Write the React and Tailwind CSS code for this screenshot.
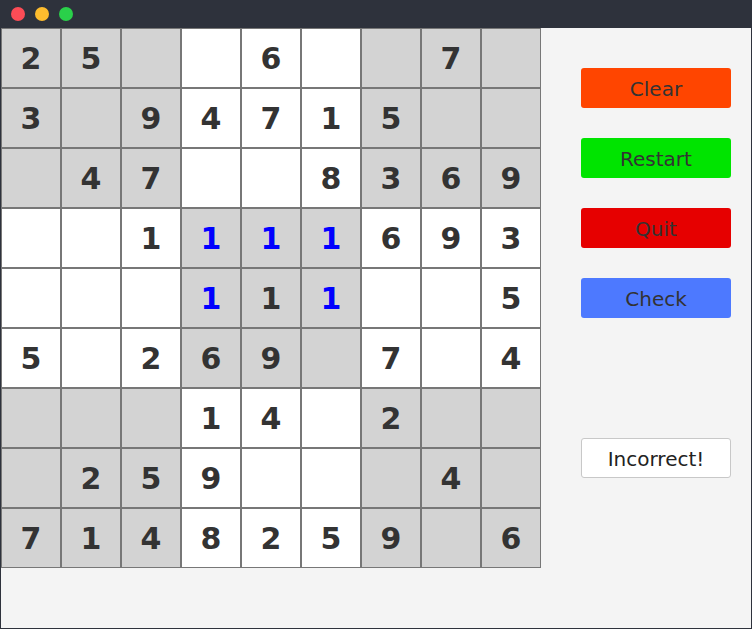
import React from 'react';

// 0 = empty, negative = user entry (shown in blue)
const board = [
  [2, 5, 0, 0, 6, 0, 0, 7, 0],
  [3, 0, 9, 4, 7, 1, 5, 0, 0],
  [0, 4, 7, 0, 0, 8, 3, 6, 9],
  [0, 0, 1, -1, -1, -1, 6, 9, 3],
  [0, 0, 0, -1, 1, -1, 0, 0, 5],
  [5, 0, 2, 6, 9, 0, 7, 0, 4],
  [0, 0, 0, 1, 4, 0, 2, 0, 0],
  [0, 2, 5, 9, 0, 0, 0, 4, 0],
  [7, 1, 4, 8, 2, 5, 9, 0, 6],
];

const isShaded = (r, c) => {
  const br = Math.floor(r / 3);
  const bc = Math.floor(c / 3);
  return (br + bc) % 2 === 0;
};

const Cell = ({ value, shaded }) => {
  const entry = value < 0;
  return (
    <div
      className={`w-[60px] h-[60px] border border-[#777777] flex items-center justify-center text-[30px] font-bold ${
        shaded ? 'bg-[#d3d3d3]' : 'bg-white'
      } ${entry ? 'text-[#0000ff]' : 'text-[#333333]'}`}
    >
      {value !== 0 ? Math.abs(value) : ''}
    </div>
  );
};

const App = () => {
  return (
    <div
      className="w-[752px] h-[629px] bg-[#2e323c] flex flex-col"
      style={{ fontFamily: '"DejaVu Sans", sans-serif' }}
    >
      {/* Title bar */}
      <div className="h-[28px] flex items-center gap-[10px] pl-[11px] shrink-0">
        <span className="w-[14px] h-[14px] rounded-full bg-[#fc4c56]" />
        <span className="w-[14px] h-[14px] rounded-full bg-[#fdbc2e]" />
        <span className="w-[14px] h-[14px] rounded-full bg-[#2ad04a]" />
      </div>

      {/* Window content */}
      <div className="mx-[1px] mb-[1px] flex-1 bg-[#f4f4f4] flex">
        <div className="grid grid-cols-9 w-[540px] h-[540px]">
          {board.map((row, r) =>
            row.map((value, c) => (
              <Cell key={`${r}-${c}`} value={value} shaded={isShaded(r, c)} />
            ))
          )}
        </div>

        <div className="ml-[40px] pt-[40px] flex flex-col">
          <button className="w-[150px] h-[40px] pt-[2px] rounded-[3px] bg-[#ff4500] text-[20px] text-[#333333]">
            Clear
          </button>
          <button className="mt-[30px] w-[150px] h-[40px] pt-[2px] rounded-[3px] bg-[#00e400] text-[20px] text-[#333333]">
            Restart
          </button>
          <button className="mt-[30px] w-[150px] h-[40px] pt-[2px] rounded-[3px] bg-[#e60000] text-[20px] text-[#333333]">
            Quit
          </button>
          <button className="mt-[30px] w-[150px] h-[40px] pt-[2px] rounded-[3px] bg-[#4d79ff] text-[20px] text-[#333333]">
            Check
          </button>
          <div className="mt-[120px] w-[150px] h-[40px] pt-[2px] rounded-[3px] bg-white border border-[#c8c8c8] flex items-center justify-center text-[20px] text-[#222222]">
            Incorrect!
          </div>
        </div>
      </div>
    </div>
  );
};

export default App;
